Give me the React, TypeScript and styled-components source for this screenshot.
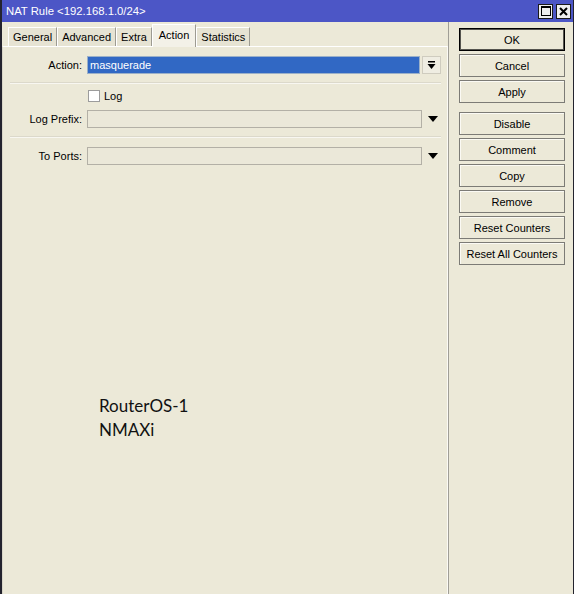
import React from "react";
import styled, { createGlobalStyle } from "styled-components";

const GlobalStyle = createGlobalStyle`
  html, body {
    margin: 0;
    padding: 0;
    background: #ece9d8;
  }
  body {
    font-family: "Liberation Sans", Arial, sans-serif;
    font-size: 11px;
    color: #000;
  }
`;

const tabs = ["General", "Advanced", "Extra", "Action", "Statistics"];
const actions = [
  ["OK", "Cancel", "Apply"],
  ["Disable", "Comment", "Copy", "Remove", "Reset Counters", "Reset All Counters"],
];

export default function App() {
  return (
    <React.Fragment>
      <GlobalStyle />
      <Window>
        <TitleBar>
          <span>{"NAT Rule <192.168.1.0/24>"}</span>
          <TitleButtons>
            <TitleButton>
              <MaxIcon />
            </TitleButton>
            <TitleButton>
              <svg width="9" height="9" viewBox="0 0 9 9">
                <path d="M1 1 L8 8 M8 1 L1 8" stroke="#000" strokeWidth="2" />
              </svg>
            </TitleButton>
          </TitleButtons>
        </TitleBar>
        <Main>
          <LeftPane>
            <TabStrip>
              {tabs.map((t) => (
                <Tab key={t} $active={t === "Action"}>
                  {t}
                </Tab>
              ))}
            </TabStrip>
            <Panel>
              <Row $top={9}>
                <Label>Action:</Label>
                <SelectBox>masquerade</SelectBox>
                <DropButton>
                  <svg width="9" height="9" viewBox="0 0 9 9">
                    <rect x="1" y="0" width="7" height="1.5" fill="#000" />
                    <path d="M0.5 3 L8.5 3 L4.5 8 Z" fill="#000" />
                  </svg>
                </DropButton>
              </Row>
              <Divider $top={8} />
              <Row $top={3}>
                <Label />
                <CheckBox />
                <CheckText>Log</CheckText>
              </Row>
              <Row $top={5}>
                <Label>Log Prefix:</Label>
                <TextInput />
                <ArrowSlot>
                  <DownArrow />
                </ArrowSlot>
              </Row>
              <Divider $top={8} />
              <Row $top={9}>
                <Label>To Ports:</Label>
                <TextInput />
                <ArrowSlot>
                  <DownArrow />
                </ArrowSlot>
              </Row>
              <Note>
                RouterOS-1
                <br />
                NMAXi
              </Note>
            </Panel>
          </LeftPane>
          <RightPane>
            {actions.map((group, i) => (
              <ButtonGroup key={i}>
                {group.map((label) => (
                  <ActionButton key={label} $default={label === "OK"}>
                    {label}
                  </ActionButton>
                ))}
              </ButtonGroup>
            ))}
          </RightPane>
        </Main>
      </Window>
    </React.Fragment>
  );
}

function MaxIcon() {
  return (
    <svg width="10" height="10" viewBox="0 0 10 10">
      <rect x="0.5" y="0.5" width="9" height="9" fill="none" stroke="#000" />
      <rect x="0" y="0" width="10" height="2" fill="#000" />
    </svg>
  );
}

function DownArrow() {
  return (
    <svg width="10" height="6" viewBox="0 0 10 6">
      <path d="M0 0 L10 0 L5 6 Z" fill="#000" />
    </svg>
  );
}

const Window = styled.div`
  width: 574px;
  height: 594px;
  box-sizing: border-box;
  border-left: 2px solid #23232e;
  border-right: 1px solid #23232e;
  display: flex;
  flex-direction: column;
  background: #ece9d8;
  overflow: hidden;
`;

const TitleBar = styled.div`
  flex: none;
  height: 22px;
  box-sizing: border-box;
  background: #4c56c6;
  color: #fff;
  font-size: 11.3px;
  display: flex;
  align-items: center;
  justify-content: space-between;
  padding: 0 2px 0 4px;
`;

const TitleButtons = styled.div`
  display: flex;
  gap: 3px;
`;

const TitleButton = styled.span`
  width: 15px;
  height: 15px;
  box-sizing: border-box;
  border: 1px solid #1a1a1a;
  background: #efefef;
  display: flex;
  align-items: center;
  justify-content: center;
`;

const Main = styled.div`
  flex: 1;
  display: flex;
  min-height: 0;
`;

const LeftPane = styled.div`
  width: 446px;
  flex: none;
  display: flex;
  flex-direction: column;
`;

const TabStrip = styled.div`
  height: 24px;
  flex: none;
  display: flex;
  align-items: flex-end;
  padding-left: 6px;
`;

const Tab = styled.div<{ $active?: boolean }>`
  box-sizing: border-box;
  height: ${(p) => (p.$active ? "23px" : "19px")};
  padding: ${(p) => (p.$active ? "0 6px 3px" : "0 4px")};
  margin-bottom: ${(p) => (p.$active ? "-1px" : "0")};
  display: flex;
  align-items: center;
  border-top: 1px solid #fff;
  border-left: 1px solid #fff;
  border-right: 1px solid #9d9b92;
  background: ${(p) => (p.$active ? "#f3f1e8" : "#e6e3d3")};
  position: relative;
  z-index: ${(p) => (p.$active ? 1 : 0)};
`;

const Panel = styled.div`
  flex: 1;
  display: flex;
  flex-direction: column;
  border-top: 1px solid #fff;
  border-left: 1px solid #d9d6c8;
  border-right: 1px solid #fbfaf5;
`;

const Row = styled.div<{ $top: number }>`
  display: flex;
  align-items: center;
  height: 18px;
  margin-top: ${(p) => p.$top}px;
`;

const Label = styled.div`
  width: 79px;
  margin-right: 5px;
  text-align: right;
  white-space: nowrap;
`;

const SelectBox = styled.div`
  width: 333px;
  height: 18px;
  box-sizing: border-box;
  border: 1px solid #9bb0c8;
  background: #3168c4;
  color: #fff;
  padding-left: 2px;
  display: flex;
  align-items: center;
`;

const DropButton = styled.div`
  width: 19px;
  height: 18px;
  box-sizing: border-box;
  margin-left: 2px;
  border: 1px solid #cfccbf;
  background: #efede2;
  display: flex;
  align-items: center;
  justify-content: center;
`;

const TextInput = styled.div`
  width: 335px;
  height: 18px;
  box-sizing: border-box;
  border: 1px solid #b3b0a6;
  background: #ebe8d9;
`;

const ArrowSlot = styled.div`
  width: 21px;
  display: flex;
  justify-content: center;
`;

const CheckBox = styled.div`
  width: 12px;
  height: 12px;
  box-sizing: border-box;
  margin-left: 1px;
  border: 1px solid #9c9c9c;
  background: #fff;
`;

const CheckText = styled.span`
  margin-left: 4px;
`;

const Divider = styled.div<{ $top: number }>`
  margin: ${(p) => p.$top}px 6px 0 7px;
  border-top: 1px solid #dcd9cb;
  border-bottom: 1px solid #f8f7f1;
`;

const Note = styled.div`
  margin-top: 229px;
  padding-left: 96px;
  font-family: Lato, "Open Sans", sans-serif;
  font-size: 17px;
  line-height: 24px;
  color: #111;
`;

const RightPane = styled.div`
  flex: 1;
  border-left: 1px solid #a09e96;
  padding: 6px 0 0 10px;
  display: flex;
  flex-direction: column;
  gap: 9px;
`;

const ButtonGroup = styled.div`
  display: flex;
  flex-direction: column;
  gap: 3px;
`;

const ActionButton = styled.div<{ $default?: boolean }>`
  width: 106px;
  height: 23px;
  box-sizing: border-box;
  border: 1px solid ${(p) => (p.$default ? "#000" : "#7c7b76")};
  box-shadow: ${(p) =>
    p.$default ? "inset 0 0 0 1px #55544f" : "inset 1px 1px 0 #fbfaf4"};
  background: #ece9d8;
  display: flex;
  align-items: center;
  justify-content: center;
  white-space: nowrap;
`;
